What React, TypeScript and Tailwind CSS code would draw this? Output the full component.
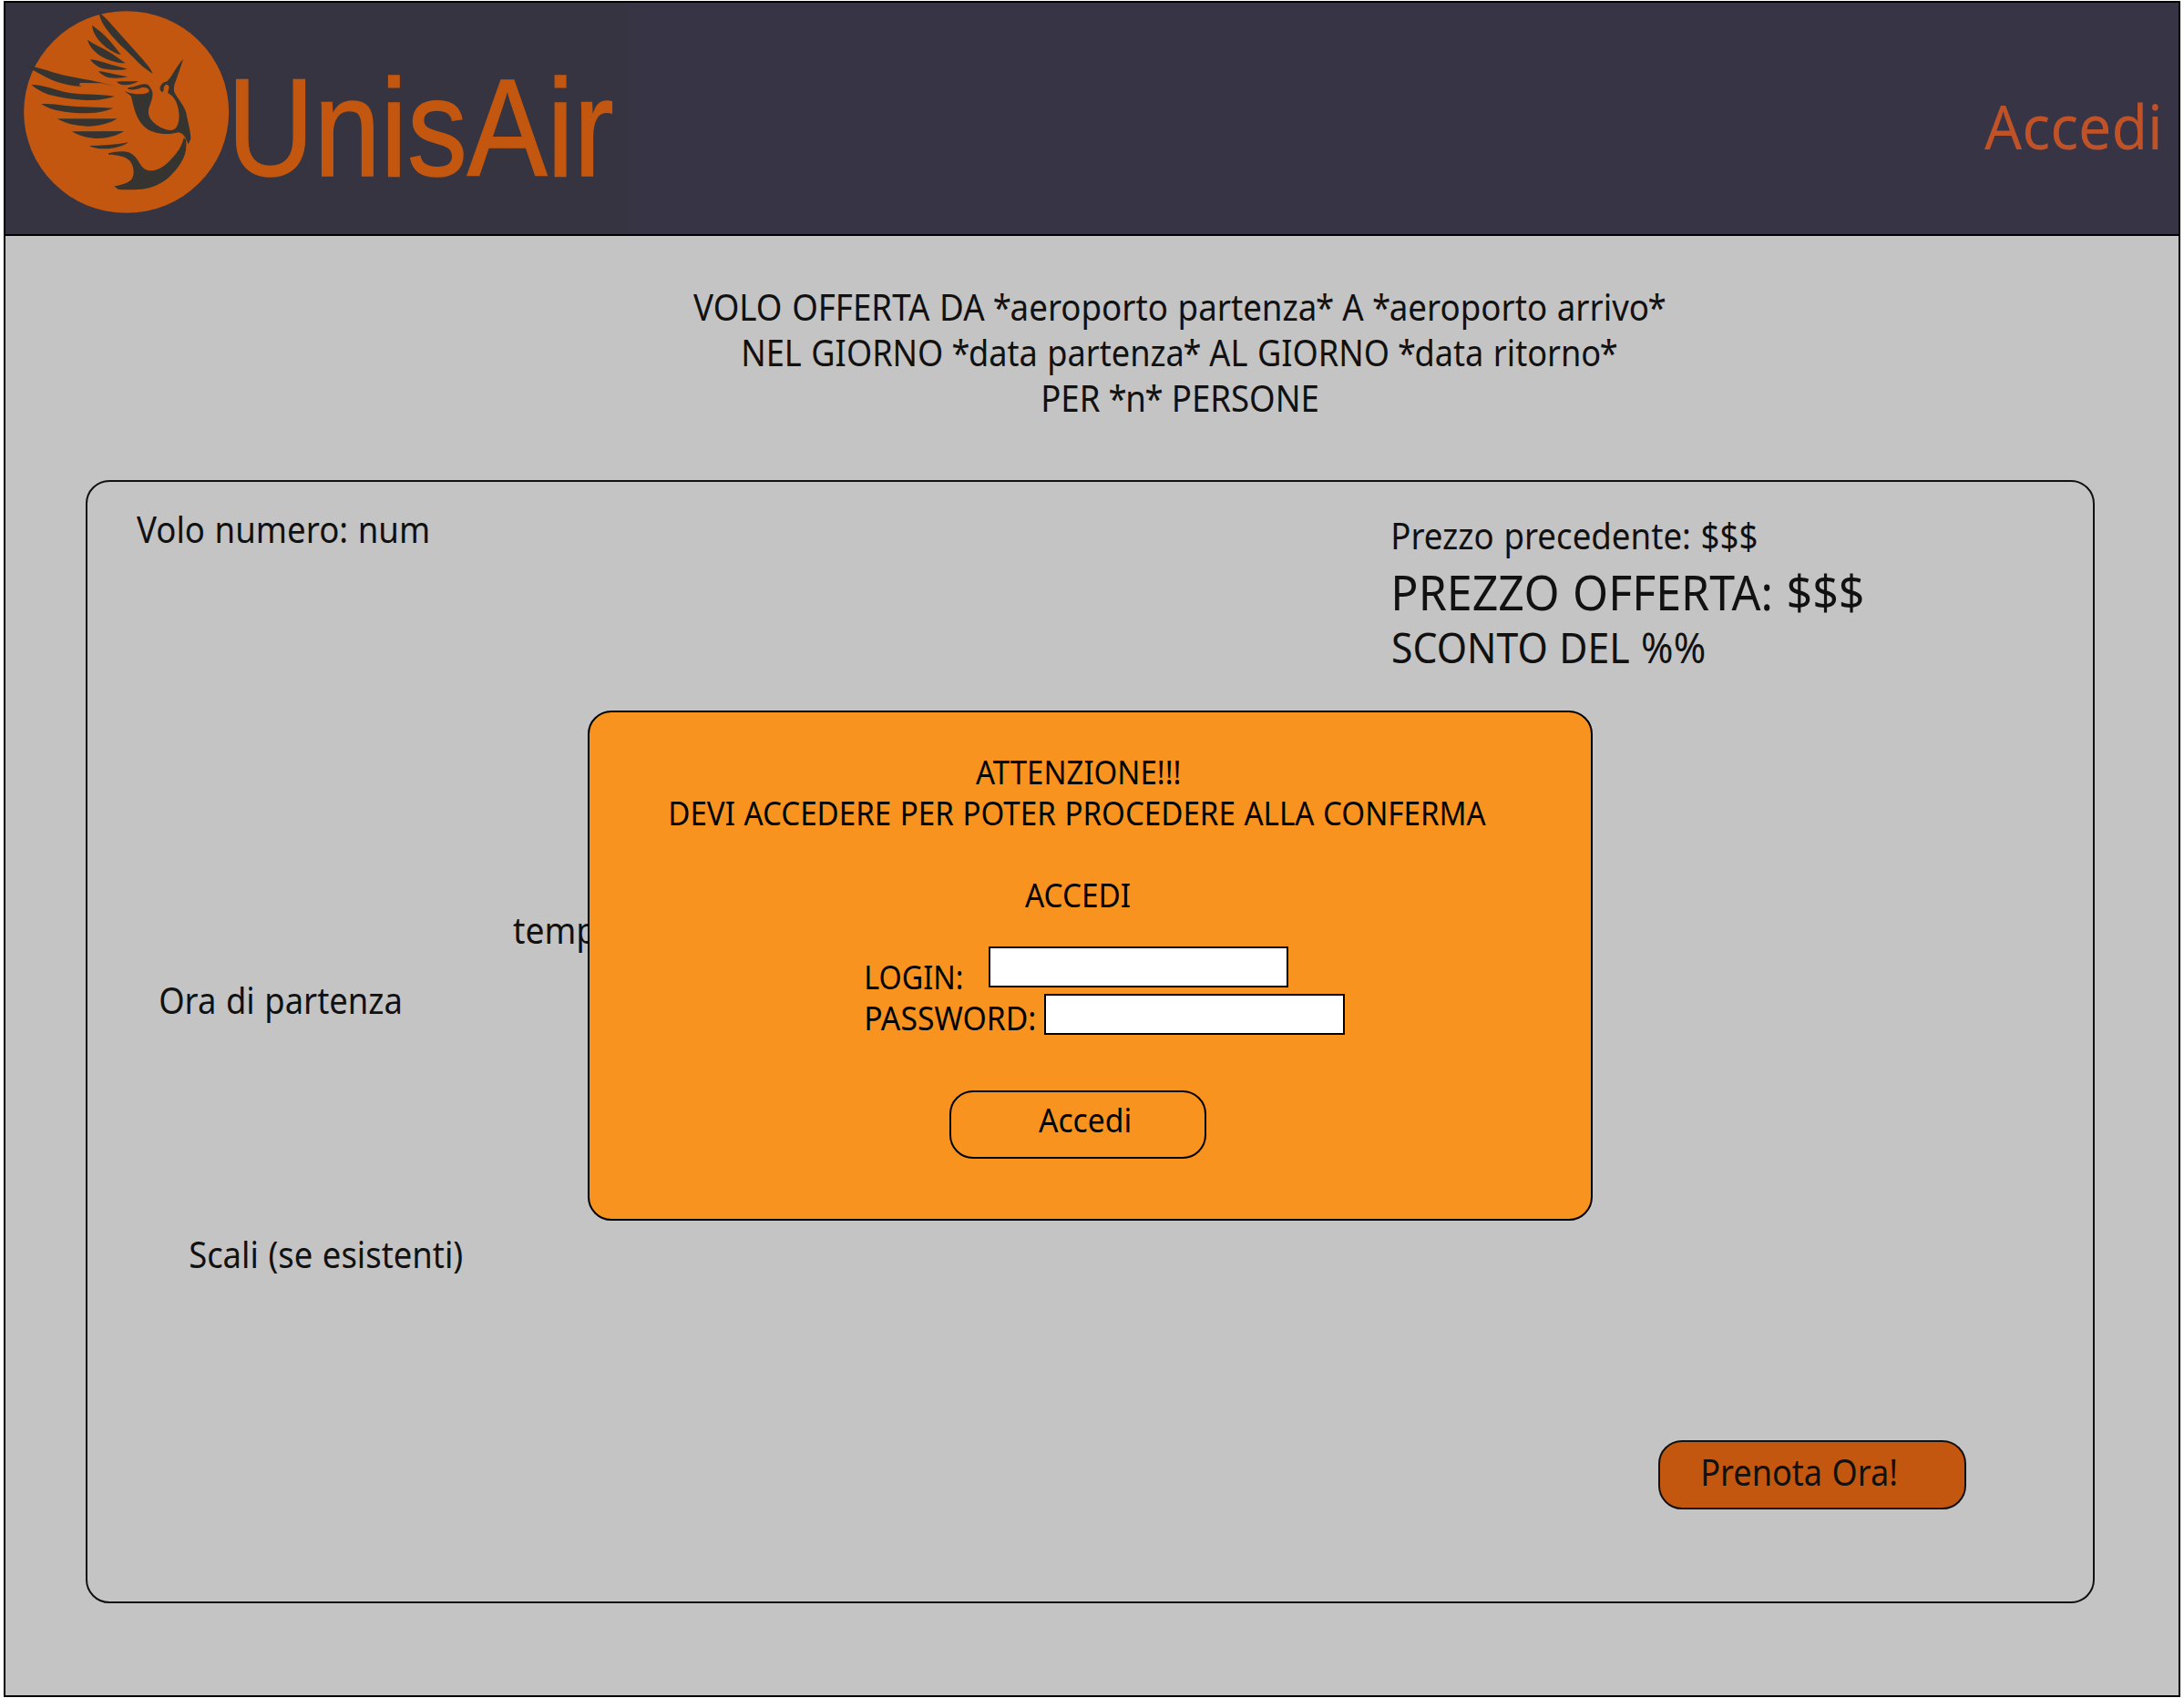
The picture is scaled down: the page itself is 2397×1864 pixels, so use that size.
import React from 'react';

const measure = document.createElement('canvas').getContext('2d')!;

type FitProps = {
  text: string;
  size: number;
  width: number;
  family?: string;
  className?: string;
};

/** One line of text, condensed so that its ink spans exactly `width` pixels. */
function Fit({ text, size, width, family = 'Noto Sans', className = '' }: FitProps) {
  measure.font = `${size}px "${family}"`;
  const m = measure.measureText(text);
  const parts = text.split(/(\*)/).filter(Boolean);
  const stars = parts.filter((p) => p === '*').length;
  const spaces = text.split(' ').length - 1;
  const tightened = size * (0.08 * stars - (text.endsWith('*') ? 0.04 : 0) - 0.03 * spaces);
  const scale = width / (m.actualBoundingBoxLeft + m.actualBoundingBoxRight - tightened);
  return (
    <span className={`block whitespace-nowrap ${className}`} style={{ width }}>
      <span
        className="block w-max origin-left [word-spacing:0.03em]"
        style={{
          fontSize: size,
          fontFamily: `"${family}", sans-serif`,
          transform: `translateX(${m.actualBoundingBoxLeft * scale}px) scaleX(${scale})`,
        }}
      >
        {stars === 0
          ? text
          : parts.map((p, i) =>
              p === '*' ? (
                <span key={i} className="mx-[-0.04em]">
                  *
                </span>
              ) : (
                p
              ),
            )}
      </span>
    </span>
  );
}

const feathers = [
  'M326 40 C340 52 350 62 362 75 L470 196 C485 213 497 228 503 242 C480 230 458 210 440 190 C410 160 385 140 360 108 C345 90 328 65 326 40Z',
  'M303 83 C325 98 345 115 362 135 C375 152 388 166 398 180 C378 176 352 160 335 143 C318 125 305 105 303 83Z',
  'M288 131 C310 146 335 157 358 170 C378 182 395 195 413 208 C385 209 350 196 328 182 C308 168 293 150 288 131Z',
  'M297 196 C315 197 333 203 350 208 C372 215 395 220 419 227 C395 233 360 231 335 225 C318 219 305 208 297 196Z',
  'M324 235 C342 235 358 241 374 244 C390 248 405 249 420 253 C405 258 375 258 355 255 C342 251 331 243 324 235Z',
  'M384 269 C405 267 430 268 455 267 C445 275 425 281 405 280 C396 278 388 274 384 269Z',
  'M80 212 C110 218 145 228 178 239 C215 250 255 256 296 264 L338 273 L382 285 L335 274 L264 273 L260 280 L269 284 C240 285 210 277 180 267 C150 255 125 240 110 232 C98 226 88 219 80 212Z',
  'M103 278 C140 280 175 292 210 302 C260 313 320 308 377 317 C355 325 320 331 285 330 C240 329 200 322 165 313 C140 304 118 293 103 278Z',
  'M136 342 C165 341 190 344 215 348 C265 353 320 352 373 356 C345 368 305 374 265 373 C225 371 165 365 136 342Z',
  'M189 391 L386 391 C362 406 325 416 288 416 C250 415 212 406 189 391Z',
  'M237 433 L408 432 C385 447 350 457 315 456 C282 454 255 445 237 433Z',
  'M294 480 C335 480 380 477 423 469 C405 482 375 490 345 490 C325 490 305 487 294 480Z',
  'M357 505 C375 500 395 497 418 500 C440 505 452 523 463 543 C471 554 480 562 496 562 C520 562 540 548 558 530 C583 506 600 480 605 454 L612 460 C614 475 614 490 609 508 C600 535 580 562 556 584 C532 604 500 620 465 623 C435 625 405 626 388 623 L376 613 C395 610 420 605 433 591 C444 575 442 548 428 530 C414 515 385 509 357 509Z',
  'M409 299 C425 308 455 312 475 309 C488 306 492 303 491 297 C487 289 478 286 465 289 C450 296 433 297 421 293 L422 289 C440 288 455 279 475 277 C489 276 495 287 500 298 C506 312 500 330 494 345 C487 360 487 375 493 387 C503 405 525 420 545 426 C560 430 572 431 580 420 C592 403 592 375 585 350 C580 330 570 315 552 306 L557 287 C551 272 542 279 539 290 C540 295 538 300 535 304 C525 300 524 286 533 277 C540 268 547 272 553 265 C570 245 580 220 603 194 C597 215 588 240 581 260 C573 280 570 292 575 305 C585 325 605 345 613 371 C618 400 628 430 628 458 L620 475 L612 458 C606 442 595 434 580 437 C560 443 530 443 508 435 C485 430 465 412 452 385 C440 358 437 335 431 316Z',
];

function Logo() {
  return (
    <div className="flex w-[683px] bg-[#353440]">
      <svg className="h-[252px] w-[252px] shrink-0" viewBox="18 9 756 756">
        <ellipse cx="416" cy="369" rx="337.5" ry="332.5" fill="#c3570f" />
        <g fill="#353431">
          {feathers.map((d) => (
            <path key={d} d={d} />
          ))}
        </g>
      </svg>
      <Fit
        text="UnisAir"
        size={153}
        width={413}
        family="Liberation Sans"
        className="mt-[52px] ml-px leading-[170px] text-[#c3570f] [-webkit-text-stroke:1.6px_#c3570f]"
      />
    </div>
  );
}

function LoginDialog() {
  return (
    <div
      role="dialog"
      className="absolute top-[251px] left-[549px] flex h-[560px] w-[1103px] flex-col rounded-[26px] border-2 border-black bg-[#f9931f] pt-[43px] leading-[45px] text-black"
    >
      <div className="flex flex-col items-center pr-[28px]">
        <Fit text="ATTENZIONE!!!" size={35.6} width={223} />
        <Fit text="DEVI ACCEDERE PER POTER PROCEDERE ALLA CONFERMA" size={35.6} width={895} className="ml-[2px]" />
        <Fit text="ACCEDI" size={35.6} width={115} className="mt-[45px]" />
      </div>
      <form className="mt-[34px] flex flex-col pl-[304px]">
        <label className="flex h-[52px] items-start">
          <Fit text="LOGIN:" size={35.6} width={104} className="mt-[11px]" />
          <input className="ml-[30px] h-[45px] w-[329px] border-2 border-black bg-white" />
        </label>
        <label className="flex h-[45px] items-start">
          <Fit text="PASSWORD:" size={35.6} width={184} className="mt-[4px]" />
          <input type="password" className="ml-[11px] h-[45px] w-[330px] border-2 border-black bg-white" />
        </label>
        <button
          type="button"
          className="mt-[61px] ml-[91px] flex h-[75px] w-[282px] items-start rounded-[26px] border-2 border-black pt-[8px] pl-[96px]"
        >
          <Fit text="Accedi" size={35.6} width={100} />
        </button>
      </form>
    </div>
  );
}

export default function App() {
  return (
    <div className="h-[1864px] w-[2397px] overflow-hidden bg-white pt-px pl-1">
      <div className="h-[1862px] w-[2389px] border-2 border-black bg-[#c4c4c4] text-[#111111]">
        <header className="flex h-[256px] justify-between border-b-2 border-black bg-[#363445]">
          <Logo />
          <Fit
            text="Accedi"
            size={67.5}
            width={191.5}
            className="mt-[95px] mr-[22px] leading-[80px] text-[#c05228]"
          />
        </header>

        <h1 className="flex flex-col items-center pt-[53px] pl-[191px] leading-[50px]">
          <Fit text="VOLO OFFERTA DA *aeroporto partenza* A *aeroporto arrivo*" size={39.5} width={1067} className="ml-px" />
          <Fit text="NEL GIORNO *data partenza* AL GIORNO *data ritorno*" size={39.5} width={959} className="ml-[3px]" />
          <Fit text="PER *n* PERSONE" size={39.5} width={301} className="ml-[2px]" />
        </h1>

        <main className="relative mt-[65px] ml-[88px] flex h-[1233px] w-[2205px] rounded-[26px] border-2 border-[#111111]">
          <section className="flex w-[1433px] flex-col pt-[27px] leading-[50px]">
            <Fit text="Volo numero: num" size={39.5} width={319.5} className="ml-[54px]" />
            <Fit text="temp" size={39.5} width={91} className="mt-[390px] ml-[467px]" />
            <Fit text="Ora di partenza" size={39.5} width={263} className="mt-[27px] ml-[80px]" />
            <Fit text="Scali (se esistenti)" size={39.5} width={298.5} className="mt-[229px] ml-[113px]" />
          </section>
          <section className="flex flex-col pt-[34px]">
            <Fit text="Prezzo precedente: $$$" size={39.5} width={399} className="leading-[50px]" />
            <Fit text="PREZZO OFFERTA: $$$" size={53.6} width={513} className="mt-[7px] ml-[2px] leading-[60px]" />
            <Fit text="SCONTO DEL %%" size={44.8} width={342} className="mt-[7px] leading-[48px]" />
            <button
              type="button"
              className="mt-auto mb-[101px] ml-[291px] flex h-[76px] w-[338px] items-start rounded-[26px] border-2 border-[#111111] bg-[#c3570f] pt-[8px] pl-[47px] leading-[50px]"
            >
              <Fit text="Prenota Ora!" size={39.5} width={211.5} />
            </button>
          </section>
          <LoginDialog />
        </main>
      </div>
    </div>
  );
}
